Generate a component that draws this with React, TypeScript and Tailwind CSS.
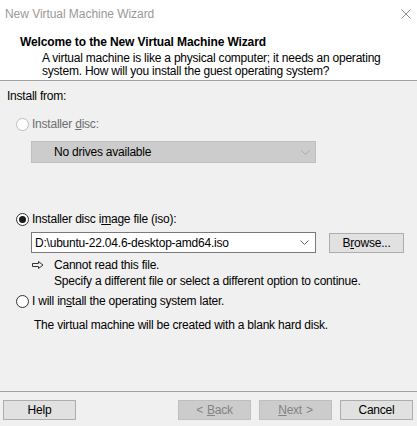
import React from "react";

const Radio = ({ checked, disabled }: { checked?: boolean; disabled?: boolean }) => (
  <span
    className={
      disabled
        ? "flex h-[13px] w-[13px] shrink-0 items-center justify-center rounded-full border border-[#bcbcbc] bg-white"
        : "flex h-[13px] w-[13px] shrink-0 items-center justify-center rounded-full border border-[#333333] bg-white"
    }
  >
    {checked && <span className="h-[7px] w-[7px] rounded-full bg-[#1a1a1a]" />}
  </span>
);

const Chevron = ({ color }: { color: string }) => (
  <svg width="9" height="5" viewBox="0 0 9 5" className="shrink-0">
    <polyline points="0.5,0.5 4.5,4.5 8.5,0.5" fill="none" stroke={color} strokeWidth="1" />
  </svg>
);

const Btn = ({ children, disabled }: { children: React.ReactNode; disabled?: boolean }) => (
  <div
    className={
      disabled
        ? "flex h-[20px] w-[73px] items-center justify-center border border-[#bfbfbf] bg-[#cccccc] text-[#838383]"
        : "flex h-[20px] w-[73px] items-center justify-center border border-[#adadad] bg-[#e1e1e1] text-black"
    }
  >
    {children}
  </div>
);

export default function App() {
  return (
    <div className="flex h-[426px] w-[417px] flex-col overflow-hidden bg-[#f0f0f0] font-['Liberation_Sans',Arial,sans-serif] text-[12px] tracking-[-0.22px] text-black">
      <div className="bg-white">
        <div className="flex h-[27px] items-center justify-between pl-[5px] pr-[6px]">
          <span className="text-[12px] tracking-[-0.05px] text-[#999999]">New Virtual Machine Wizard</span>
          <svg width="10" height="10" viewBox="0 0 10 10">
            <path d="M0.5 0.5 L9.5 9.5 M9.5 0.5 L0.5 9.5" stroke="#8a8a8a" strokeWidth="1" fill="none" />
          </svg>
        </div>
        <div className="h-[54px] border-b border-[#a0a0a0] pt-[8px]">
          <div className="pl-[20px] font-bold leading-[14px] tracking-[-0.12px]">Welcome to the New Virtual Machine Wizard</div>
          <div className="mt-[3px] pl-[42px] leading-[13px]">
            A virtual machine is like a physical computer; it needs an operating
            <br />
            system. How will you install the guest operating system?
          </div>
        </div>
      </div>

      <div className="pl-[7px] pt-[8px] leading-[14px]">Install from:</div>

      <div className="mt-[13px] flex h-[16px] items-center gap-[3px] pl-[16px] text-[#6d6d6d]">
        <Radio disabled />
        <span>
          Installer <span className="underline">d</span>isc:
        </span>
      </div>

      <div className="ml-[31px] mt-[9px] flex h-[22px] w-[285px] items-center justify-between border border-[#bfbfbf] bg-[#cccccc] pl-[22px] pr-[5px]">
        <span>No drives available</span>
        <Chevron color="#a8a8a8" />
      </div>

      <div className="mt-[48px] flex h-[16px] items-center gap-[3px] pl-[16px]">
        <Radio checked />
        <span>
          Installer disc i<span className="underline">m</span>age file (iso):
        </span>
      </div>

      <div className="ml-[31px] mt-[5px] flex items-start">
        <div className="flex h-[21px] w-[285px] items-center justify-between border border-[#7a7a7a] bg-white pl-[3px] pr-[6px]">
          <span>D:\ubuntu-22.04.6-desktop-amd64.iso</span>
          <Chevron color="#606060" />
        </div>
        <div className="ml-[13px] mt-[1px] flex h-[20px] w-[75px] items-center justify-center border border-[#adadad] bg-[#e1e1e1]">
          <span>
            B<span className="underline">r</span>owse...
          </span>
        </div>
      </div>

      <div className="mt-[4px] flex pl-[32px] leading-[16px]">
        <div className="flex h-[16px] w-[22px] items-center">
          <svg width="12" height="8" viewBox="0 0 12 8">
            <path
              d="M0.5 2.5 H6.5 V0.5 L11 4 L6.5 7.5 V5.5 H0.5 Z"
              fill="none"
              stroke="#333333"
              strokeWidth="1"
              strokeLinejoin="miter"
            />
          </svg>
        </div>
        <div>
          Cannot read this file.
          <br />
          Specify a different file or select a different option to continue.
        </div>
      </div>

      <div className="mt-[4px] flex h-[16px] items-center gap-[3px] pl-[16px]">
        <Radio />
        <span>
          I will in<span className="underline">s</span>tall the operating system later.
        </span>
      </div>

      <div className="mt-[9px] pl-[34px] leading-[14px]">
        The virtual machine will be created with a blank hard disk.
      </div>

      <div className="mt-auto flex items-start justify-between border-t border-[#a0a0a0] pb-[6px] pl-[3px] pr-[4px] pt-[8px]">
        <Btn>Help</Btn>
        <div className="flex gap-[8px]">
          <Btn disabled>
            <span className="mr-[4px]">&lt;</span>
            <span className="underline">B</span>ack
          </Btn>
          <Btn disabled>
            <span className="underline">N</span>ext
            <span className="ml-[4px]">&gt;</span>
          </Btn>
          <Btn>Cancel</Btn>
        </div>
      </div>
    </div>
  );
}
